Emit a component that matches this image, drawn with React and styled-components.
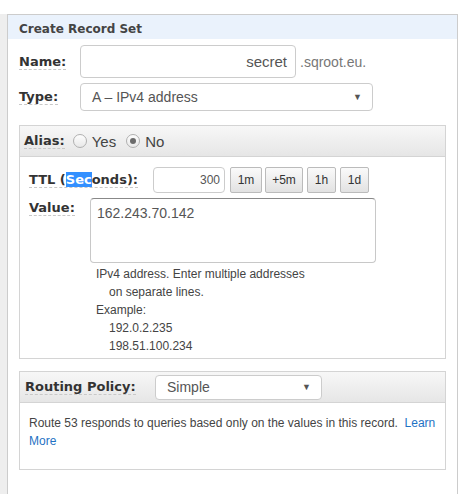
import React from "react";
import styled, { createGlobalStyle } from "styled-components";

const Global = createGlobalStyle`
  html, body { margin: 0; padding: 0; background: #fff; }
  body { font-family: "Liberation Sans", Arial, sans-serif; color: #444; }
  ::selection { background: #3390ff; color: #fff; }
`;

const Page = styled.div`
  display: flex;
  padding-top: 14px;
  height: 494px;
  box-sizing: border-box;
  overflow: hidden;
`;

const Strip = styled.div`
  width: 7px;
  background: #eeeeee;
  flex: none;
`;

const Panel = styled.div`
  width: 451px;
  box-sizing: border-box;
  border: 1px solid #cccccc;
  border-bottom: none;
  flex: none;
`;

const PanelHeader = styled.div`
  height: 24px;
  background: #eaf2fc;
  padding-left: 11px;
  display: flex;
  align-items: center;
  font-family: "DejaVu Sans", Verdana, sans-serif;
  font-weight: bold;
  font-size: 12px;
  color: #444;
  padding-top: 4px;
  box-sizing: border-box;
`;

const Body = styled.div`
  padding: 6px 11px 0 11px;
`;

const Row = styled.div`
  display: flex;
  align-items: center;
  margin-bottom: ${(p) => p.$mb || 0}px;
`;

const Label = styled.span`
  font-family: "DejaVu Sans", Verdana, sans-serif;
  font-weight: bold;
  font-size: 13px;
  color: #333;
  border-bottom: 1px dashed #c8c8c8;
  line-height: 15px;
`;

const Selected = styled.span`
  background: #3390ff;
  color: #fff;
`;

const LabelCell = styled.div`
  width: ${(p) => p.$w}px;
  flex: none;
  display: flex;
  align-self: ${(p) => (p.$top ? "flex-start" : "center")};
  padding-top: ${(p) => p.$pt || 0}px;
`;

const TextInput = styled.div`
  width: ${(p) => p.$w}px;
  height: ${(p) => p.$h}px;
  box-sizing: border-box;
  border: 1px solid #cccccc;
  border-radius: 4px;
  display: flex;
  align-items: center;
  justify-content: flex-end;
  padding-right: ${(p) => p.$pr || 8}px;
  font-size: ${(p) => p.$fs || 15}px;
  color: #555;
  background: #fff;
`;

const Suffix = styled.span`
  margin-left: 4px;
  font-size: 14px;
  color: #777;
`;

const Select = styled.div`
  width: ${(p) => p.$w}px;
  height: ${(p) => p.$h}px;
  box-sizing: border-box;
  border: 1px solid #cccccc;
  border-radius: 4px;
  display: flex;
  align-items: center;
  justify-content: space-between;
  padding: 0 10px 0 11px;
  font-size: 14px;
  color: #555;
  background: #fff;
`;

const Arrow = styled.span`
  font-size: 9px;
  color: #555;
`;

const Box = styled.div`
  width: 427px;
  box-sizing: border-box;
  border: 1px solid #d4d4d4;
  margin-top: ${(p) => p.$mt}px;
`;

const BoxHeader = styled.div`
  height: 31px;
  box-sizing: border-box;
  border-bottom: 1px solid #d4d4d4;
  background: linear-gradient(#f7f7f7, #e6e6e6);
  display: flex;
  align-items: center;
  padding-left: ${(p) => p.$pl || 4}px;
`;

const RadioGroup = styled.label`
  display: flex;
  align-items: center;
  font-size: 15px;
  color: #444;
  margin-left: ${(p) => p.$ml}px;
`;

const Radio = styled.span`
  width: 12px;
  height: 12px;
  border-radius: 50%;
  border: 1px solid #b0b0b0;
  background: linear-gradient(#fdfdfd, #e8e8e8);
  display: inline-flex;
  align-items: center;
  justify-content: center;
  margin-right: 5px;
  &::after {
    content: "";
    width: 6px;
    height: 6px;
    border-radius: 50%;
    background: ${(p) => (p.$on ? "#6b6b6b" : "transparent")};
  }
`;

const BoxBody = styled.div`
  padding: ${(p) => p.$pad};
`;

const Btn = styled.div`
  height: 26px;
  width: ${(p) => p.$w}px;
  box-sizing: border-box;
  border: 1px solid #bbbbbb;
  border-radius: 2px;
  background: linear-gradient(#fafafa, #e2e2e2);
  display: flex;
  align-items: center;
  justify-content: center;
  font-size: 12px;
  color: #333;
  margin-left: ${(p) => p.$ml}px;
`;

const TextArea = styled.div`
  width: 286px;
  height: 65px;
  box-sizing: border-box;
  border: 1px solid #c8c8c8;
  border-top-color: #888;
  border-radius: 4px;
  padding: 6px 6px;
  font-size: 14px;
  color: #555;
  background: #fff;
`;

const Help = styled.div`
  margin-left: 67px;
  margin-top: 2px;
  font-size: 12px;
  color: #444;
  line-height: 18px;
`;

const Indent = styled.div`
  padding-left: 13px;
`;

const Para = styled.p`
  margin: 0;
  font-size: 12px;
  line-height: 18px;
  color: #444;
`;

const Link = styled.a`
  color: #1f72c4;
  text-decoration: none;
`;

export default function App() {
  return (
    <>
      <Global />
      <Page>
        <Strip />
        <Panel>
          <PanelHeader>Create Record Set</PanelHeader>
          <Body>
            <Row $mb={5}>
              <LabelCell $w={61}>
                <Label>Name:</Label>
              </LabelCell>
              <TextInput $w={216} $h={33}>secret</TextInput>
              <Suffix>.sqroot.eu.</Suffix>
            </Row>
            <Row>
              <LabelCell $w={61}>
                <Label>Type:</Label>
              </LabelCell>
              <Select $w={293} $h={28}>
                <span>A – IPv4 address</span>
                <Arrow>▼</Arrow>
              </Select>
            </Row>
            <Box $mt={14}>
              <BoxHeader>
                <Label>Alias:</Label>
                <RadioGroup $ml={8}>
                  <Radio />
                  Yes
                </RadioGroup>
                <RadioGroup $ml={10}>
                  <Radio $on />
                  No
                </RadioGroup>
              </BoxHeader>
              <BoxBody $pad="10px 0 3px 9px">
                <Row $mb={5}>
                  <LabelCell $w={124}>
                    <Label>
                      TTL (<Selected>Sec</Selected>onds):
                    </Label>
                  </LabelCell>
                  <TextInput $w={72} $h={26} $fs={12} $pr={4}>300</TextInput>
                  <Btn $w={32} $ml={5}>1m</Btn>
                  <Btn $w={38} $ml={3}>+5m</Btn>
                  <Btn $w={29} $ml={4}>1h</Btn>
                  <Btn $w={29} $ml={4}>1d</Btn>
                </Row>
                <Row>
                  <LabelCell $w={61} $top $pt={2}>
                    <Label>Value:</Label>
                  </LabelCell>
                  <TextArea>162.243.70.142</TextArea>
                </Row>
                <Help>
                  <div>IPv4 address. Enter multiple addresses</div>
                  <Indent>on separate lines.</Indent>
                  <div>Example:</div>
                  <Indent>192.0.2.235</Indent>
                  <Indent>198.51.100.234</Indent>
                </Help>
              </BoxBody>
            </Box>
            <Box $mt={12}>
              <BoxHeader $pl={5}>
                <LabelCell $w={130}>
                  <Label>Routing Policy:</Label>
                </LabelCell>
                <Select $w={167} $h={25}>
                  <span>Simple</span>
                  <Arrow>▼</Arrow>
                </Select>
              </BoxHeader>
              <BoxBody $pad="11px 8px 19px 9px">
                <Para>
                  Route 53 responds to queries based only on the values in this record.{"\u00a0 "}
                  <Link href="#">Learn More</Link>
                </Para>
              </BoxBody>
            </Box>
          </Body>
        </Panel>
      </Page>
    </>
  );
}
